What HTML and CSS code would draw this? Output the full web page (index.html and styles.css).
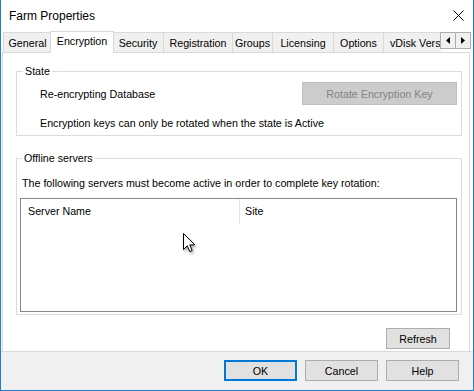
FILE: index.html
```html
<!DOCTYPE html>
<html>
<head>
<meta charset="utf-8">
<title>Farm Properties</title>
<link rel="stylesheet" href="styles.css">
</head>
<body>
<div class="window">
  <div class="titlebar">
    <span class="title">Farm Properties</span>
    <svg class="close" width="11" height="11" viewBox="0 0 11 11"><path d="M0.5 0.5L10.5 10.5M10.5 0.5L0.5 10.5" stroke="#000" stroke-width="1" fill="none"/></svg>
  </div>
  <div class="tabstrip">
    <div class="tabs">
      <div class="tab t-general">General</div>
      <div class="tab active t-enc">Encryption</div>
      <div class="tab t-sec">Security</div>
      <div class="tab t-reg">Registration</div>
      <div class="tab t-grp">Groups</div>
      <div class="tab t-lic">Licensing</div>
      <div class="tab t-opt">Options</div>
      <div class="tab t-vdisk">vDisk Vers</div>
    </div>
    <div class="scroll">
      <div class="sbtn"><svg width="4" height="7" viewBox="0 0 4 7"><polygon points="4,0 0,3.5 4,7" fill="#000"/></svg></div>
      <div class="sbtn"><svg width="4" height="7" viewBox="0 0 4 7"><polygon points="0,0 4,3.5 0,7" fill="#000"/></svg></div>
    </div>
  </div>
  <div class="panel">
    <div class="group state">
      <div class="legend">State</div>
      <div class="row">
        <span>Re-encrypting Database</span>
        <button class="btn disabled">Rotate Encryption Key</button>
      </div>
      <div class="note">Encryption keys can only be rotated when the state is Active</div>
    </div>
    <div class="group offline">
      <div class="legend">Offline servers</div>
      <div class="desc">The following servers must become active in order to complete key rotation:</div>
      <div class="list">
        <div class="list-head">
          <div class="c1">Server Name</div>
          <div class="c2">Site</div>
        </div>
      </div>
    </div>
    <div class="refresh-row"><button class="btn refresh">Refresh</button></div>
  </div>
  <div class="footer">
    <button class="btn fbtn ok">OK</button>
    <button class="btn fbtn">Cancel</button>
    <button class="btn fbtn">Help</button>
  </div>
  <svg class="cursor" width="14" height="22" viewBox="0 0 14 22"><path d="M0.5 0.5L0.5 16.5L4.3 12.8L6.8 18.6L9.2 17.6L6.8 11.9L11.8 11.9Z" fill="#fff" stroke="#000" stroke-width="1" stroke-linejoin="miter"/></svg>
</div>
</body>
</html>
```

FILE: styles.css
```css
* { box-sizing: border-box; }
html, body { margin: 0; padding: 0; }
body {
  font-family: "Liberation Sans", Arial, sans-serif;
  font-size: 10.7px;
  color: #000;
  background: #fff;
  overflow: hidden;
}
.window {
  position: relative;
  width: 474px;
  height: 391px;
  border: 1px solid #1c7fd6;
  border-top: none;
  background: #fff;
  display: flex;
  flex-direction: column;
}
.titlebar {
  flex: none;
  height: 31px;
  display: flex;
  align-items: center;
  justify-content: space-between;
  padding: 0 9px 0 8px;
  font-size: 12px;
}
.tabstrip {
  flex: none;
  height: 21px;
  display: flex;
  padding: 0 2px;
}
.tabs {
  flex: 1;
  min-width: 0;
  display: flex;
  align-items: flex-end;
}
.tab {
  flex: none;
  height: 20px;
  border: 1px solid #d9d9d9;
  border-bottom: none;
  background: #f0f0f0;
  margin-left: -1px;
  padding-top: 3px;
  line-height: 14px;
  text-align: center;
  white-space: nowrap;
  overflow: hidden;
}
.tab:first-child { margin-left: 0; }
.tab.active {
  height: 22px;
  margin: 0 -1px -1px -2px;
  padding-top: 2px;
  background: #fff;
  position: relative;
  z-index: 1;
}
.t-general { width: 49px; }
.t-enc { width: 64px; }
.t-sec { width: 52px; }
.t-reg { width: 70px; }
.t-grp { width: 41px; }
.t-lic { width: 62px; }
.t-opt { width: 51px; }
.t-vdisk { width: 58px; text-align: left; padding-left: 6px; border-right: none; }
.scroll {
  flex: none;
  display: flex;
  margin-top: 1px;
  height: 17px;
}
.sbtn {
  width: 16px;
  height: 17px;
  border: 1px solid #adadad;
  background: #f0f0f0;
  display: flex;
  align-items: center;
  justify-content: center;
}
.sbtn + .sbtn { margin-left: -1px; }
.panel {
  flex: 1;
  min-height: 0;
  border: 1px solid #d9d9d9;
  border-bottom: none;
  margin: 0 3px 0 1px;
  padding: 0 7px 0 13px;
  display: flex;
  flex-direction: column;
  background: #fff;
}
.group { border: 1px solid #dcdcdc; }
.legend {
  width: fit-content;
  margin-top: -8px;
  padding: 0 2px;
  background: #fff;
  line-height: 14px;
}
.state {
  margin-top: 18px;
  padding: 0 4px 5px 23px;
}
.state .legend { margin-left: -17px; }
.state .row {
  display: flex;
  justify-content: space-between;
  align-items: center;
  height: 23px;
  margin-top: 4px;
}
.state .note {
  margin-top: 11px;
  line-height: 14px;
}
.offline {
  margin-top: 22px;
  padding: 0 4px 2px 3px;
}
.offline .legend { margin-left: 2px; }
.desc {
  margin-top: 11px;
  padding-left: 2px;
  line-height: 14px;
}
.list {
  margin-top: 8px;
  height: 114px;
  border: 1px solid #828790;
  background: #fff;
}
.list-head {
  display: flex;
  height: 25px;
  line-height: 25px;
}
.c1 {
  width: 219px;
  padding-left: 7px;
  border-right: 1px solid #e5e5e5;
}
.c2 { padding-left: 5px; }
.refresh-row {
  display: flex;
  justify-content: flex-end;
  margin-top: 13px;
}
.btn {
  font: inherit;
  color: #000;
  height: 21px;
  padding: 0;
  border: 1px solid #adadad;
  background: #e1e1e1;
}
.btn.disabled {
  width: 155px;
  height: 23px;
  background: #cccccc;
  border-color: #bfbfbf;
  color: #838383;
}
.refresh { width: 64px; margin-right: 12px; }
.footer {
  flex: none;
  height: 39px;
  border-top: 1px solid #dadada;
  background: #f0f0f0;
  display: flex;
  justify-content: flex-end;
  align-items: flex-start;
  gap: 8px;
  padding: 8px 14px 0 0;
}
.fbtn { width: 73px; }
.ok { border: 2px solid #0078d7; }
.cursor {
  position: absolute;
  left: 182px;
  top: 233px;
  filter: drop-shadow(1px 2px 1.5px rgba(0,0,0,0.35));
}
```
